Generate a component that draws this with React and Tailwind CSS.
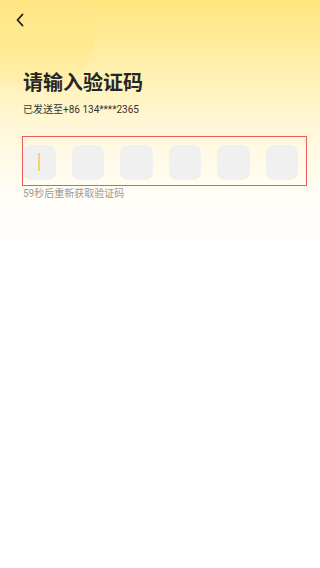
import React from "react";

function App() {
  const boxes = [0, 1, 2, 3, 4, 5];

  return (
    <div
      className="relative min-h-[568px] w-full overflow-hidden bg-[linear-gradient(180deg,#ffe67e_0px,#fff0b0_70px,#fff8da_130px,#fffdf5_190px,#ffffff_250px)]"
      style={{ fontFamily: 'Roboto, "Noto Sans CJK SC", sans-serif' }}
    >
      {/* decorative circle */}
      <div className="absolute -left-[25px] -top-[27px] h-[120px] w-[120px] rounded-full bg-[linear-gradient(180deg,#ffe47a_0%,#ffe98f_50%,rgba(255,244,200,0)_100%)]" />

      <div className="relative">
        <div className="flex h-[39px] items-center pl-[15px]">
          <svg width="10" height="14" viewBox="0 0 10 14" fill="none">
            <path d="M7.5 1.5 L2.5 7 L7.5 12.5" stroke="#1a1a1a" strokeWidth="1.8" strokeLinecap="round" strokeLinejoin="round" />
          </svg>
        </div>

        <div className="px-[23px] pt-[31px]">
          <h1 className="text-[20px] font-bold leading-[26px] text-[#262626]">请输入验证码</h1>
          <p className="mt-[7px] text-[10px] leading-[14px] text-[#333333]">已发送至+86 134****2365</p>
        </div>

        <div className="ml-[22px] mt-[19px] h-[50px] w-[285px] border border-[#ee5a5a] pt-[7.5px]">
          <div className="flex gap-[16px]">
            {boxes.map((i) => (
              <div key={i} className="flex h-[35px] w-[32.5px] items-center rounded-[8px] bg-[#f0f0f0] pl-[15px]">
                {i === 0 && <div className="h-[18px] w-[2px] bg-[#f6d46a]" />}
              </div>
            ))}
          </div>
        </div>

        <p className="ml-[23px] mt-[1px] text-[10px] leading-[14px] text-[#9a9a9a]">59秒后重新获取验证码</p>
      </div>
    </div>
  );
}

export default App;
